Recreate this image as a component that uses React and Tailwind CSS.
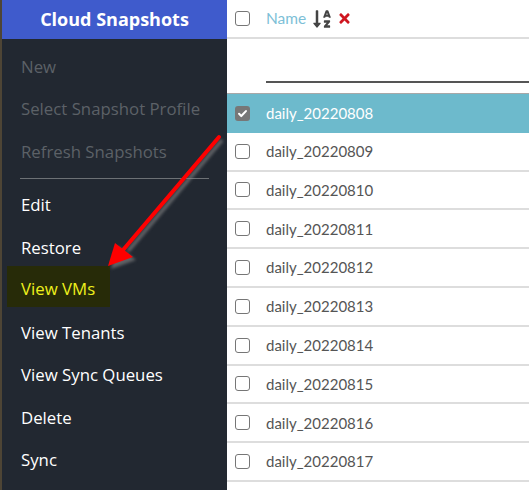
import React from 'react'
import { FaSortAlphaDown, FaTimes } from 'react-icons/fa'

const font = { fontFamily: 'Lato, "Open Sans", sans-serif' }
const sideFont = { fontFamily: '"Open Sans", Lato, sans-serif' }

const topItems = ['New', 'Select Snapshot Profile', 'Refresh Snapshots']
const bottomItems = ['Edit', 'Restore', 'View VMs', 'View Tenants', 'View Sync Queues', 'Delete', 'Sync']

const rows = [
  'daily_20220808',
  'daily_20220809',
  'daily_20220810',
  'daily_20220811',
  'daily_20220812',
  'daily_20220813',
  'daily_20220814',
  'daily_20220815',
  'daily_20220816',
  'daily_20220817',
]

function Checkbox({ checked }) {
  if (checked) {
    return (
      <span className="flex h-[15px] w-[15px] items-center justify-center rounded-[3px] bg-[#777777]">
        <svg viewBox="0 0 16 16" className="h-[11px] w-[11px]" fill="none" stroke="white" strokeWidth="3" strokeLinecap="round" strokeLinejoin="round">
          <path d="M3 8.5l3.2 3.2L13 4.5" />
        </svg>
      </span>
    )
  }
  return <span className="block h-[15px] w-[15px] rounded-[3px] border-[1.5px] border-[#767676] bg-white" />
}

function Sidebar() {
  return (
    <div className="flex w-[227px] shrink-0 flex-col border-l-2 border-[#4e4535] bg-[#222831]" style={sideFont}>
      <div className="flex h-[39px] items-center justify-center bg-[#3f5bcc] text-[18px] font-bold text-white">
        Cloud Snapshots
      </div>
      <div className="pt-[6px]">
        {topItems.map((label) => (
          <div key={label} className="flex h-[42.5px] items-center pl-[19px] text-[16.8px] text-[#5c6167]">
            {label}
          </div>
        ))}
        <div className="mx-[18px] my-[5px] h-px bg-[#6d7175]" />
        {bottomItems.map((label) =>
          label === 'View VMs' ? (
            <div key={label} className="flex h-[42.5px] items-start pl-[5px]">
              <span className="-mt-[3px] flex h-[41px] items-center bg-[#272b08] pl-[14px] pr-[15px] pt-[5px] text-[16.8px] text-[#eef01c]">
                {label}
              </span>
            </div>
          ) : (
            <div key={label} className="flex h-[42.5px] items-center pl-[19px] text-[16.8px] text-white">
              {label}
            </div>
          )
        )}
      </div>
    </div>
  )
}

function Table() {
  return (
    <div className="flex min-w-0 flex-1 flex-col bg-white">
      <div className="flex h-[39px] items-center border-b-2 border-[#dddddd] pl-[8px]">
        <Checkbox />
        <span className="ml-[16px] text-[15.5px] text-[#7dbfd7]">Name</span>
        <FaSortAlphaDown className="ml-[6px] h-[20px] w-[20px] text-[#444444]" />
        <FaTimes className="ml-[6px] h-[15px] w-[13px] text-[#cf1620]" />
      </div>
      <div className="h-[55px] border-b border-[#a8a8a8] pl-[39px] pt-[42px]">
        <div className="h-[2px] bg-[#555555]" />
      </div>
      {rows.map((name, i) => (
        <div
          key={name}
          className={
            i === 0
              ? 'flex h-[38.8px] items-center bg-[#6dbacc] pl-[8px]'
              : 'flex h-[38.8px] items-center border-b-2 border-[#dddddd] pl-[8px]'
          }
        >
          <Checkbox checked={i === 0} />
          <span className={i === 0 ? 'ml-[16px] text-[15px] text-white' : 'ml-[16px] text-[15px] text-[#555555]'}>
            {name}
          </span>
        </div>
      ))}
    </div>
  )
}

export default function App() {
  return (
    <div className="relative flex h-[490px] w-[529px] overflow-hidden bg-white" style={font}>
      <Sidebar />
      <Table />
      {/* annotation arrow */}
      <svg className="pointer-events-none absolute left-0 top-0" width="529" height="490">
        <defs>
          <filter id="sh" x="-20%" y="-20%" width="140%" height="140%">
            <feGaussianBlur stdDeviation="1.5" />
          </filter>
        </defs>
        <g transform="translate(3 3)" filter="url(#sh)" opacity="0.6">
          <line x1="219" y1="137" x2="125" y2="248" stroke="#888" strokeWidth="4" />
          <polygon points="108,266 115,243 133,257" fill="#888" />
        </g>
        <line x1="219" y1="137" x2="123" y2="250" stroke="#ff0000" strokeWidth="4" strokeLinecap="round" />
        <polygon points="108,266 115,243 133,257" fill="#ff0000" />
      </svg>
    </div>
  )
}
